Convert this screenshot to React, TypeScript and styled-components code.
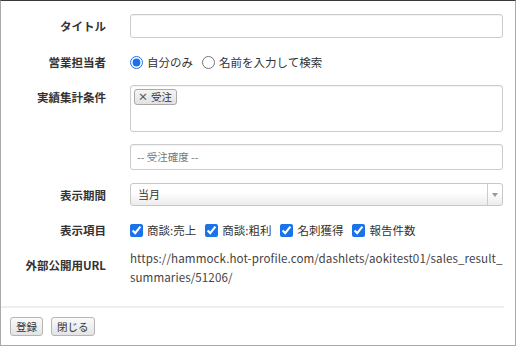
import styled, { createGlobalStyle } from "styled-components";

const GlobalStyle = createGlobalStyle`
  html, body {
    margin: 0;
    padding: 0;
    background: #fff;
  }
  * {
    box-sizing: border-box;
  }
`;

const Frame = styled.div`
  width: 516px;
  height: 346px;
  border: 1px solid #a9a9a9;
  border-top-color: #3a3a3a;
  background: #fff;
  font-family: "Noto Sans CJK JP", "Noto Sans", sans-serif;
  font-size: 11.5px;
  color: #333;
  display: flex;
  flex-direction: column;
`;

const Form = styled.div`
  display: flex;
  flex-direction: column;
  padding: 13px 12px 0 0;
`;

const Row = styled.div<{ $mt?: number }>`
  display: grid;
  grid-template-columns: 105px 373px;
  column-gap: 24px;
  align-items: start;
  margin-top: ${(p) => p.$mt ?? 12}px;
  &:first-child {
    margin-top: 0;
  }
`;

const Label = styled.div`
  text-align: right;
  font-weight: bold;
  line-height: 24px;
  white-space: nowrap;
`;

const TextInput = styled.div<{ $h?: number }>`
  height: ${(p) => p.$h ?? 24}px;
  border: 1px solid #ccc;
  border-radius: 3px;
  box-shadow: inset 0 1px 1px rgba(0, 0, 0, 0.06);
  background: #fff;
  padding: 2px 3px;
`;

const Placeholder = styled.div`
  height: 26px;
  border: 1px solid #ccc;
  border-radius: 3px;
  box-shadow: inset 0 1px 1px rgba(0, 0, 0, 0.06);
  padding: 0 6px;
  line-height: 24px;
  color: #777;
  font-size: 10.5px;
`;

const Tag = styled.span`
  display: inline-flex;
  align-items: center;
  gap: 3px;
  height: 16px;
  padding: 0 4px 0 3px;
  border: 1px solid #aaa;
  border-radius: 3px;
  background: linear-gradient(#f4f4f4, #e2e2e2);
  font-size: 10.5px;
  color: #333;
  line-height: 14px;
`;

const TagX = styled.span`
  font-size: 10px;
  color: #555;
  font-weight: bold;
`;

const Options = styled.div`
  display: flex;
  align-items: center;
  gap: 9px;
  height: 24px;
`;

const Option = styled.label`
  display: inline-flex;
  align-items: center;
  gap: 4px;
  white-space: nowrap;
  input {
    margin: 0;
    width: 13px;
    height: 13px;
    accent-color: #1a73e8;
  }
`;

const Select = styled.div`
  height: 23px;
  border: 1px solid #c8c8c8;
  border-radius: 3px;
  background: linear-gradient(#fff 40%, #ececec);
  display: flex;
  align-items: stretch;
`;

const SelectText = styled.div`
  flex: 1;
  padding-left: 7px;
  line-height: 21px;
  font-size: 11px;
`;

const Arrow = styled.div`
  width: 15px;
  border-left: 1px solid #ccc;
  display: flex;
  align-items: center;
  justify-content: center;
  &::after {
    content: "";
    border-left: 3px solid transparent;
    border-right: 3px solid transparent;
    border-top: 4px solid #999;
  }
`;

const Url = styled.div`
  font-size: 11.6px;
  letter-spacing: 0.08px;
  line-height: 19px;
  color: #444;
  word-break: break-all;
  margin-top: -4px;
`;

const Divider = styled.div`
  margin-top: auto;
  margin-right: 11px;
  height: 2px;
  background: #eee;
`;

const Footer = styled.div`
  display: flex;
  gap: 8px;
  padding: 9px 9px 9px 9px;
`;

const Button = styled.button`
  height: 19px;
  padding: 0 5px;
  border: 1px solid #b5b5b5;
  border-radius: 3px;
  background: linear-gradient(#fafafa, #e4e4e4);
  font-family: inherit;
  font-size: 10.5px;
  color: #333;
  line-height: 17px;
`;

export default function App() {
  return (
    <>
      <GlobalStyle />
      <Frame>
        <Form>
          <Row>
            <Label>タイトル</Label>
            <TextInput />
          </Row>
          <Row>
            <Label>営業担当者</Label>
            <Options>
              <Option>
                <input type="radio" name="owner" defaultChecked />
                自分のみ
              </Option>
              <Option>
                <input type="radio" name="owner" />
                名前を入力して検索
              </Option>
            </Options>
          </Row>
          <Row $mt={11}>
            <Label>実績集計条件</Label>
            <TextInput $h={47}>
              <Tag>
                <TagX>×</TagX>受注
              </Tag>
            </TextInput>
          </Row>
          <Row $mt={12}>
            <span />
            <Placeholder>-- 受注確度 --</Placeholder>
          </Row>
          <Row $mt={13}>
            <Label>表示期間</Label>
            <Select>
              <SelectText>当月</SelectText>
              <Arrow />
            </Select>
          </Row>
          <Row $mt={11}>
            <Label>表示項目</Label>
            <Options>
              <Option>
                <input type="checkbox" defaultChecked />
                商談:売上
              </Option>
              <Option>
                <input type="checkbox" defaultChecked />
                商談:粗利
              </Option>
              <Option>
                <input type="checkbox" defaultChecked />
                名刺獲得
              </Option>
              <Option>
                <input type="checkbox" defaultChecked />
                報告件数
              </Option>
            </Options>
          </Row>
          <Row $mt={11}>
            <Label>外部公開用URL</Label>
            <Url>
              https://hammock.hot-profile.com/dashlets/aokitest01/sales_result_
              <br />
              summaries/51206/
            </Url>
          </Row>
        </Form>
        <Divider />
        <Footer>
          <Button>登録</Button>
          <Button>閉じる</Button>
        </Footer>
      </Frame>
    </>
  );
}
